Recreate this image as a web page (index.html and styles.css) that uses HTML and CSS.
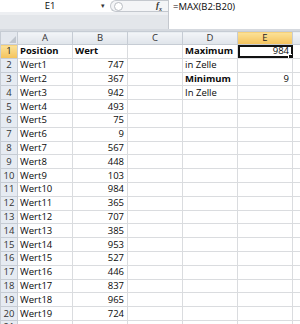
FILE: index.html
```html
<!DOCTYPE html>
<html lang="de">
<head>
    <meta charset="UTF-8">
    <title>Maximum</title>
    <link rel="stylesheet" href="styles.css">
</head>
<body>
    <div class="formula-row">
        <div class="left-part">
            <div class="top-line">
                <div class="namebox">E1<span class="arrow">&#9662;</span></div>
                <div class="fx-box"><span class="circle"></span><span class="fx">f<sub>x</sub></span></div>
            </div>
            <div class="grey-band"></div>
        </div>
        <div class="formula">=MAX(B2:B20)</div>
    </div>

    <table class="sheet">
        <colgroup>
            <col class="c-hdr"><col class="c"><col class="c"><col class="c"><col class="c"><col class="c"><col>
        </colgroup>
        <thead>
            <tr>
                <th class="corner"><span class="tri"></span></th>
                <th>A</th><th>B</th><th>C</th><th>D</th><th class="sel">E</th><th></th>
            </tr>
        </thead>
        <tbody id="rows"></tbody>
    </table>

    <script>
        const data = [
            ['Position', 'Wert'],
            ['Wert1', 747], ['Wert2', 367], ['Wert3', 942], ['Wert4', 493],
            ['Wert5', 75], ['Wert6', 9], ['Wert7', 567], ['Wert8', 448],
            ['Wert9', 103], ['Wert10', 984], ['Wert11', 365], ['Wert12', 707],
            ['Wert13', 385], ['Wert14', 953], ['Wert15', 527], ['Wert16', 446],
            ['Wert17', 837], ['Wert18', 965], ['Wert19', 724], ['', '']
        ];
        const side = {
            1: ['Maximum', 984],
            2: ['in Zelle', ''],
            3: ['Minimum', 9],
            4: ['In Zelle', '']
        };

        const body = document.getElementById('rows');
        data.forEach(function (row, i) {
            const n = i + 1;
            const tr = document.createElement('tr');
            const d = side[n] || ['', ''];
            const bold = n === 1 || n === 3 ? ' bold' : '';
            tr.innerHTML =
                '<th class="rh' + (n === 1 ? ' sel' : '') + '">' + n + '</th>' +
                '<td class="' + (n === 1 ? 'bold' : '') + '">' + row[0] + '</td>' +
                '<td class="' + (n === 1 ? 'bold' : 'num') + '">' + row[1] + '</td>' +
                '<td></td>' +
                '<td class="' + bold + '">' + d[0] + '</td>' +
                '<td class="num' + (n === 1 ? ' active' : '') + '">' + d[1] +
                (n === 1 ? '<span class="handle"></span>' : '') + '</td>' +
                '<td></td>';
            body.appendChild(tr);
        });
    </script>
</body>
</html>
```

FILE: styles.css
```css
body {
    margin: 0;
    width: 300px;
    height: 324px;
    overflow: hidden;
    background: #fff;
    font-family: "Open Sans", "Liberation Sans", sans-serif;
    font-size: 9.5px;
    color: #0a0a0a;
}

.formula-row {
    display: flex;
    height: 29px;
    border-bottom: 2px solid #d5d9df;
}

.left-part {
    width: 168px;
    display: flex;
    flex-direction: column;
}

.top-line {
    display: flex;
    height: 12px;
    background: #fff;
}

.namebox {
    width: 110px;
    position: relative;
    text-align: center;
    line-height: 12px;
    padding-right: 10px;
    box-sizing: border-box;
}

.namebox .arrow {
    position: absolute;
    right: 5px;
    top: 0;
    font-size: 7px;
    color: #333;
}

.fx-box {
    flex: 1;
    display: flex;
    justify-content: space-between;
    align-items: center;
    border: 1px solid #c4c8ce;
    border-right: none;
    border-radius: 6px 0 0 6px;
    background: #f4f5f7;
    padding: 0 6px 0 3px;
}

.circle {
    width: 7px;
    height: 7px;
    border: 1px solid #b8bcc2;
    border-radius: 50%;
    background: #fff;
}

.fx {
    font-family: "Liberation Serif", serif;
    font-style: italic;
    font-weight: bold;
    font-size: 9px;
    color: #333;
}

.fx sub {
    font-size: 6px;
}

.grey-band {
    flex: 1;
    background: #e3e6ea;
    border-top: 3px solid #edeff2;
}

.formula {
    flex: 1;
    background: #fff;
    border-left: 1px solid #c4c8ce;
    padding: 1px 4px;
    line-height: 11px;
}

.sheet {
    border-collapse: collapse;
    table-layout: fixed;
    width: 310px;
}

.c-hdr {
    width: 17px;
}

.c {
    width: 55px;
}

.sheet th,
.sheet td {
    height: 13.8px;
    padding: 0 2px;
    border: 1px solid #dadcdf;
    white-space: nowrap;
    overflow: hidden;
    line-height: 12px;
    box-sizing: border-box;
    text-align: left;
}

.sheet thead th {
    height: 12px;
    font-weight: normal;
    text-align: center;
    color: #333;
    background: linear-gradient(#f3f5f8, #dfe4ea);
    border-color: #c6ccd4;
}

.sheet th.corner {
    position: relative;
    background: #e4e8ee;
}

.tri {
    position: absolute;
    right: 1px;
    bottom: 1px;
    width: 0;
    height: 0;
    border-left: 7px solid transparent;
    border-bottom: 7px solid #bfc5cd;
}

.sheet th.rh {
    font-weight: normal;
    text-align: center;
    color: #333;
    background: #e6ebf2;
    border-color: #c6ccd4;
    padding: 0;
}

.sheet th.sel {
    background: linear-gradient(#fbe29a, #f4c25a);
    color: #222;
}

.bold {
    font-weight: bold;
}

.num {
    text-align: right !important;
    padding-right: 3px !important;
}

.sheet td.active {
    position: relative;
    outline: 2px solid #111;
    outline-offset: -2px;
}

.handle {
    position: absolute;
    right: -2px;
    bottom: -2px;
    width: 4px;
    height: 4px;
    background: #111;
    border: 1px solid #fff;
}
```
